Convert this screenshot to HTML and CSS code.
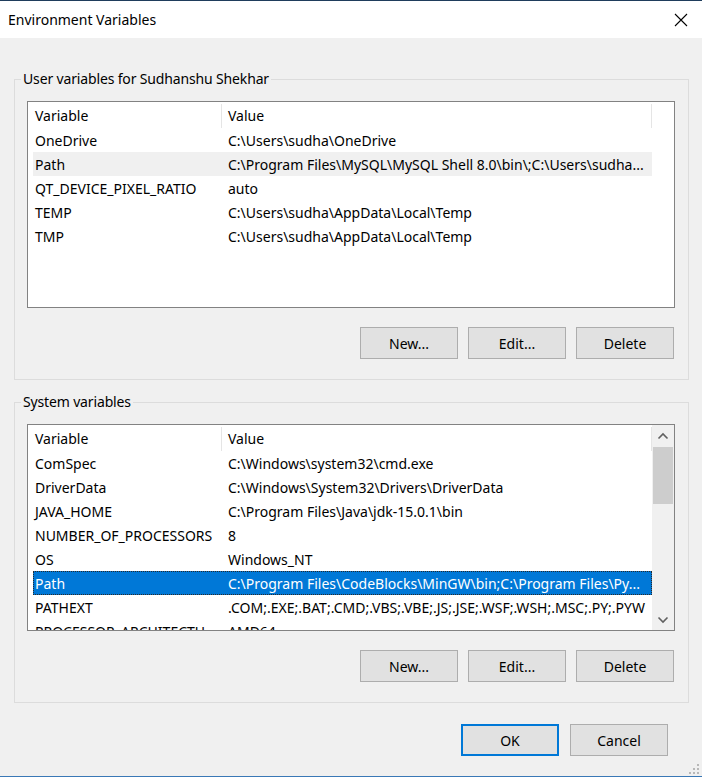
FILE: index.html
```html
<!DOCTYPE html>
<html>
<head>
<meta charset="utf-8">
<link rel="stylesheet" href="styles.css">
</head>
<body>
<div class="window">
  <div class="titlebar">
    <span class="title">Environment Variables</span>
    <svg class="close" width="14" height="14" viewBox="0 0 14 14"><path d="M1 1 L13 13 M13 1 L1 13" stroke="#000" stroke-width="1.1" fill="none"/></svg>
  </div>
  <div class="content">
    <div class="group">
      <span class="legend">User variables for Sudhanshu Shekhar</span>
      <div class="list">
        <div class="rows">
          <div class="hdr"><div class="c1">Variable</div><div class="c2">Value</div></div>
          <div class="row"><div class="c1">OneDrive</div><div class="c2">C:\Users\sudha\OneDrive</div></div>
          <div class="row hl"><div class="c1">Path</div><div class="c2">C:\Program Files\MySQL\MySQL Shell 8.0\bin\;C:\Users\sudha...</div></div>
          <div class="row"><div class="c1">QT_DEVICE_PIXEL_RATIO</div><div class="c2">auto</div></div>
          <div class="row"><div class="c1">TEMP</div><div class="c2">C:\Users\sudha\AppData\Local\Temp</div></div>
          <div class="row"><div class="c1">TMP</div><div class="c2">C:\Users\sudha\AppData\Local\Temp</div></div>
        </div>
        <div class="gutter"></div>
      </div>
      <div class="buttons">
        <button class="btn">New...</button>
        <button class="btn">Edit...</button>
        <button class="btn">Delete</button>
      </div>
    </div>
    <div class="group g2">
      <span class="legend">System variables</span>
      <div class="list">
        <div class="rows">
          <div class="hdr"><div class="c1">Variable</div><div class="c2">Value</div></div>
          <div class="row"><div class="c1">ComSpec</div><div class="c2">C:\Windows\system32\cmd.exe</div></div>
          <div class="row"><div class="c1">DriverData</div><div class="c2">C:\Windows\System32\Drivers\DriverData</div></div>
          <div class="row"><div class="c1">JAVA_HOME</div><div class="c2">C:\Program Files\Java\jdk-15.0.1\bin</div></div>
          <div class="row"><div class="c1">NUMBER_OF_PROCESSORS</div><div class="c2">8</div></div>
          <div class="row"><div class="c1">OS</div><div class="c2">Windows_NT</div></div>
          <div class="row sel"><div class="c1">Path</div><div class="c2">C:\Program Files\CodeBlocks\MinGW\bin;C:\Program Files\Py...</div></div>
          <div class="row"><div class="c1">PATHEXT</div><div class="c2">.COM;.EXE;.BAT;.CMD;.VBS;.VBE;.JS;.JSE;.WSF;.WSH;.MSC;.PY;.PYW</div></div>
          <div class="row"><div class="c1">PROCESSOR_ARCHITECTU</div><div class="c2">AMD64</div></div>
        </div>
        <div class="scrollbar">
          <div class="arrow"><svg width="12" height="8" viewBox="0 0 12 8"><path d="M1.5 6.5 L6 2 L10.5 6.5" stroke="#606060" stroke-width="1.6" fill="none"/></svg></div>
          <div class="thumb"></div>
          <div class="track"></div>
          <div class="arrow"><svg width="12" height="8" viewBox="0 0 12 8"><path d="M1.5 1.5 L6 6 L10.5 1.5" stroke="#606060" stroke-width="1.6" fill="none"/></svg></div>
        </div>
      </div>
      <div class="buttons">
        <button class="btn">New...</button>
        <button class="btn">Edit...</button>
        <button class="btn">Delete</button>
      </div>
    </div>
    <div class="footer">
      <button class="btn default">OK</button>
      <button class="btn">Cancel</button>
    </div>
  </div>
  <svg class="grip" width="12" height="12" viewBox="0 0 12 12">
    <rect x="9" y="1" width="2" height="2" fill="#b8b8b8"/>
    <rect x="5" y="5" width="2" height="2" fill="#b8b8b8"/>
    <rect x="9" y="5" width="2" height="2" fill="#b8b8b8"/>
    <rect x="1" y="9" width="2" height="2" fill="#b8b8b8"/>
    <rect x="5" y="9" width="2" height="2" fill="#b8b8b8"/>
    <rect x="9" y="9" width="2" height="2" fill="#b8b8b8"/>
  </svg>
</div>
</body>
</html>
```
FILE: styles.css
```css
* { box-sizing: border-box; }
html, body { margin: 0; padding: 0; }
body {
  font-family: "Noto Sans", "Open Sans", sans-serif;
  font-size: 14px;
  color: #000;
  background: #f0f0f0;
}
.window {
  position: relative;
  width: 702px;
  height: 777px;
  border-top: 1px solid #1f3d5c;
  border-bottom: 1px solid #3a78b6;
  background: #f0f0f0;
  display: flex;
  flex-direction: column;
  overflow: hidden;
}
.titlebar {
  height: 37px;
  flex: none;
  background: #fff;
  display: flex;
  align-items: center;
  justify-content: space-between;
  padding: 0 14px 0 8px;
}
.title { font-size: 14px; }
.close { display: block; }
.content {
  flex: 1;
  padding: 41px 0 0 14px;
  display: flex;
  flex-direction: column;
}
.group {
  position: relative;
  width: 675px;
  height: 301px;
  border: 1px solid #dcdcdc;
  padding: 21px 14px 20px 12px;
  display: flex;
  flex-direction: column;
}
.g2 { margin-top: 22px; }
.legend {
  position: absolute;
  top: -11px;
  left: 6px;
  padding: 0 2px;
  line-height: 20px;
  letter-spacing: -0.15px;
  background: #f0f0f0;
}
.list {
  height: 207px;
  margin-right: -1px;
  border: 1px solid #828282;
  background: #fff;
  display: flex;
  overflow: hidden;
}
.rows {
  width: 624px;
  padding-left: 5px;
  overflow: hidden;
}
.gutter { flex: 1; }
.hdr, .row {
  display: flex;
  width: 619px;
}
.hdr { height: 26px; line-height: 26px; padding-top: 2px; }
.hdr .c1 { border-right: 1px solid #e5e5e5; line-height: 24px; height: 24px; }
.hdr .c2 { border-right: 1px solid #e5e5e5; line-height: 24px; height: 24px; }
.row { height: 24px; line-height: 23px; padding-top: 1px; }
.c1 {
  width: 189px;
  flex: none;
  padding-left: 2px;
  white-space: nowrap;
  overflow: hidden;
}
.c2 {
  flex: 1;
  padding-left: 6px;
  white-space: nowrap;
  overflow: hidden;
}
.row.hl { background: #f0f0f0; }
.row.sel {
  background: #0078d7;
  color: #fff;
  outline: 1px dotted #2a2a2a;
  outline-offset: -1px;
}
.scrollbar {
  width: 22px;
  flex: none;
  background: #f0f0f0;
  display: flex;
  flex-direction: column;
}
.arrow {
  height: 21px;
  display: flex;
  align-items: center;
  justify-content: center;
}
.thumb {
  height: 57px;
  margin: 1px 1px 0 1px;
  background: #cdcdcd;
}
.track { flex: 1; }
.buttons {
  margin-top: 19px;
  display: flex;
  justify-content: flex-end;
  gap: 10px;
}
.btn {
  width: 98px;
  height: 32px;
  background: #e1e1e1;
  border: 1px solid #adadad;
  font-family: inherit;
  font-size: 14px;
  color: #000;
  padding: 0;
}
.btn.default { border: 2px solid #0078d7; }
.footer {
  margin-top: 21px;
  padding-right: 34px;
  display: flex;
  justify-content: flex-end;
  gap: 11px;
}
.grip {
  position: absolute;
  right: 2px;
  bottom: 1px;
}
```
